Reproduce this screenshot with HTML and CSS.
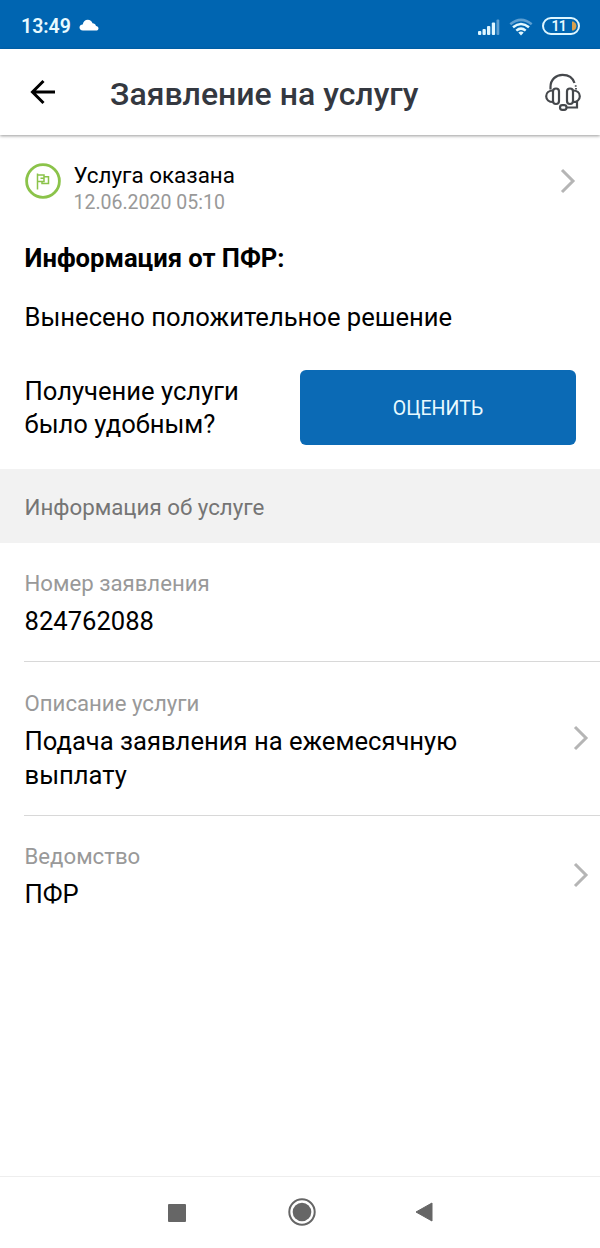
FILE: index.html
```html
<!DOCTYPE html>
<html lang="ru">
<head>
<meta charset="utf-8">
<title>Заявление на услугу</title>
<link rel="stylesheet" href="styles.css">
</head>
<body>
<div class="screen">
  <div class="status">
    <span class="time">13:49</span>
    <svg class="cloud" width="20" height="12" viewBox="0 0 20 12"><path d="M4 11.500C1.500 11.500.5 10 .5 8.500.5 6.800 2 5.500 3.700 5.500 4.300 2.500 6.200.8 8.800.8c2.300 0 4 1.500 4.700 3.500 1.800 0 3 1 3.500 2.600 1.400.1 2.500 1 2.500 2.300 0 1.400-1 2.300-2.500 2.300z" fill="#fff"/></svg>
    <div class="indicators">
      <svg width="24" height="18" viewBox="0 0 24 18"><g fill="#dff6ff"><rect x="1" y="13" width="3.300" height="4" rx="1"/><rect x="5.500" y="11" width="3.300" height="6" rx="1"/><rect x="10" y="8" width="3.300" height="9" rx="1"/><rect x="14.800" y="4.500" width="3.300" height="12.500" rx="1"/></g><rect x="19.500" y="1.500" width="2.800" height="15.500" rx="1" fill="#5d9fd2"/></svg>
      <svg width="24" height="18" viewBox="0 0 24 18" fill="none" stroke="#e2f8ff" stroke-width="2.500"><path d="M1.300 6.200Q12-2.500 22.700 6.200" stroke="#5d9fd2"/><path d="M4 9.300Q12 2.600 20 9.300"/><path d="M7.300 12.600Q12 8.600 16.700 12.600"/><path d="M12 17.500L9.300 14.500Q12 12.600 14.700 14.500z" fill="#e2f8ff" stroke="none"/></svg>
      <div class="battery"><span>11</span><svg class="charge" width="5" height="10" viewBox="0 0 5 10"><path d="M0 .5h1.500Q4.500 2.200 4.500 5T1.500 9.500H0z" fill="#d9a24f"/></svg></div>
    </div>
  </div>
  <header class="header">
    <svg class="back" width="26" height="26" viewBox="0 0 26 26" fill="none" stroke="#000" stroke-width="3"><path d="M25 13H3M13.500 2L2.500 13l11 11"/></svg>
    <h1 class="title">Заявление на услугу</h1>
    <svg class="support" width="38" height="38" viewBox="0 0 38 38" fill="none" stroke="#45484c" stroke-width="2.200"><path d="M6.500 16.500V14C6.500 6.500 12 1.800 18.500 1.800c6.200 0 10.500 3.300 12 8.200"/><path d="M31.700 12.200v1.500M32 15v1.500" stroke-width="1.800"/><rect x="9" y="15.500" width="6" height="15.500" rx="3"/><rect x="23" y="15.500" width="6" height="15.500" rx="3"/><path d="M9 17.500c-4 0-6.800 2.400-6.800 5.700S5 29 9 29M29 17.500c4 0 6.800 2.400 6.800 5.700S33 29 29 29M33 28.500v6h-10"/><rect x="16" y="32.200" width="6.500" height="4.600" rx="2.300"/></svg>
  </header>
  <section class="result">
    <div class="state">
      <svg class="flag" width="36" height="36" viewBox="0 0 36 36" fill="none" stroke="#8bc34a"><circle cx="18" cy="18" r="16.400" stroke-width="2.800"/><path d="M12.500 10.500v16M12.500 12h6.500v6.500h-6.500M19 13.800h4.500v6.700h-6.500v-2M15.500 15.300h3.500" stroke-width="1.500"/></svg>
      <div class="state-text">
        <div class="state-name">Услуга оказана</div>
        <div class="date">12.06.2020 05:10</div>
      </div>
      <svg class="chevron" width="16" height="26" viewBox="0 0 16 26"><path d="M2 2l11 11L2 24"/></svg>
    </div>
    <h2 class="from">Информация от ПФР:</h2>
    <p class="decision">Вынесено положительное решение</p>
    <div class="rate">
      <p class="question">Получение услуги<br>было удобным?</p>
      <button class="button">ОЦЕНИТЬ</button>
    </div>
  </section>
  <div class="band">Информация об услуге</div>
  <div class="row">
    <div><div class="label">Номер заявления</div><div class="value">824762088</div></div>
  </div>
  <div class="row row-description">
    <div><div class="label">Описание услуги</div><div class="value">Подача заявления на ежемесячную<br>выплату</div></div>
    <svg class="chevron" width="16" height="26" viewBox="0 0 16 26"><path d="M2 2l11 11L2 24"/></svg>
  </div>
  <div class="row row-last">
    <div><div class="label">Ведомство</div><div class="value">ПФР</div></div>
    <svg class="chevron" width="16" height="26" viewBox="0 0 16 26"><path d="M2 2l11 11L2 24"/></svg>
  </div>
  <nav class="nav">
    <svg width="18" height="18" viewBox="0 0 18 18"><rect width="18" height="18" rx="1" fill="#666"/></svg>
    <svg class="home" width="28" height="28" viewBox="0 0 28 28"><circle cx="14" cy="14" r="12.700" fill="none" stroke="#666" stroke-width="2"/><circle cx="14" cy="14" r="9.300" fill="#666"/></svg>
    <svg class="previous" width="18" height="20" viewBox="0 0 18 20"><path d="M1 10L17 1v18z" fill="#666" stroke="#666" stroke-linejoin="round"/></svg>
  </nav>
</div>
</body>
</html>
```
FILE: styles.css
```css
* { box-sizing: border-box; }
body, h1, h2, p { margin: 0; }
body { background: #fff; color: #000; font-family: Roboto, sans-serif; }
svg { display: block; flex: none; }
.screen { width: 600px; height: 1248px; display: flex; flex-direction: column; overflow: hidden; }
.status { height: 49px; background: #0065b1; display: flex; align-items: center; padding: 4px 20px 0 21px; color: #e8faff; }
.time { font-size: 19.500px; font-weight: 600; letter-spacing: 0; width: 58px; white-space: nowrap; }
.cloud { margin-bottom: 3px; }
.indicators { display: flex; align-items: center; margin-left: auto; gap: 8px; }
.battery { width: 38px; height: 18px; margin: 0 0 1px 1px; border: 2px solid #def6ff; border-radius: 9px; display: flex; align-items: center; justify-content: flex-end; gap: 6px; padding-right: 1px; font-size: 14px; font-weight: 600; letter-spacing: -.8px; line-height: 14px; }
.header { height: 86px; display: flex; align-items: center; padding: 0 18px 0 30px; box-shadow: 0 1px 3px rgba(0, 0, 0, .4); }
.title { font-size: 32px; font-weight: 500; line-height: 40px; color: #343840; margin: 4px auto 0 54px; white-space: nowrap; }
.result { padding: 27px 24px 0 24.500px; height: 334px; }
.state { display: flex; height: 58px; }
.flag { margin: 1px 13px 0 0; }
.state-text { flex: 1; }
.state-name { font-size: 22.400px; line-height: 26px; }
.date { font-size: 19.500px; line-height: 30px; color: #999; }
.chevron { fill: none; stroke: #b5b5b5; stroke-width: 3; }
.state .chevron { margin-top: 6px; }
.from { font-size: 25.600px; font-weight: 700; line-height: 34px; margin-top: 21px; }
.decision { font-size: 25.600px; line-height: 34px; margin-top: 25px; }
.rate { display: flex; justify-content: space-between; align-items: center; margin-top: 36px; height: 75px; }
.question { font-size: 25.600px; line-height: 33px; padding-top: 1px; }
.button { width: 276px; height: 75px; border: 0; border-radius: 6px; background: #0b6ab5; color: #e8faff; font: 400 19.500px Roboto, sans-serif; padding-top: 3px; }
.band { height: 74px; background: #f2f2f2; color: #757575; font-size: 22.300px; line-height: 76px; padding-left: 24.500px; }
.row { height: 119px; margin-left: 24px; padding: 27px 11.500px 0 .5px; border-bottom: 1px solid #d8d8d8; display: flex; justify-content: space-between; }
.row-description { height: 154px; padding-top: 28px; }
.row-last { border: 0; }
.row .chevron { margin-top: 35px; }
.row-last .chevron { margin-top: 19px; }
.label { font-size: 22.200px; line-height: 26px; color: #999; }
.value { font-size: 25.600px; line-height: 33.500px; margin-top: 9px; }
.nav { margin-top: auto; height: 72px; border-top: 1px solid #eee; display: grid; grid-template-columns: 120px 122px 1fr; align-items: center; padding: 0 0 0 168px; }
.home { margin-bottom: 2px; }
.previous { margin: 0 0 2px 5px; }
```
